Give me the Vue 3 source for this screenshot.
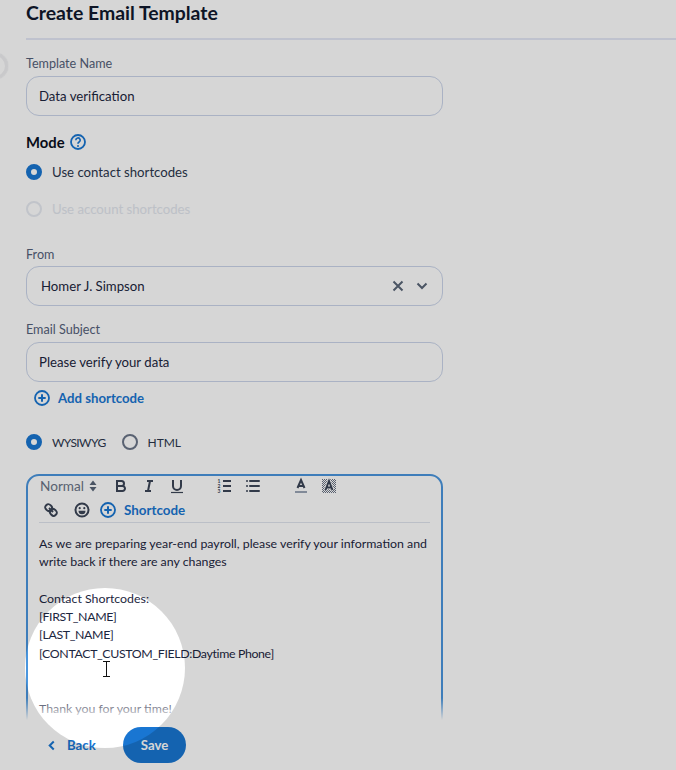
<script setup>
const bodyLines = [
  'As we are preparing year-end payroll, please verify your information and',
  'write back if there are any changes',
  '',
  'Contact Shortcodes:',
  '[FIRST_NAME]',
  '[LAST_NAME]',
  '[CONTACT_CUSTOM_FIELD:Daytime Phone]',
  '',
  '',
  'Thank you for your time!',
].map((text) => ({ text, caps: text.startsWith('[') }))
</script>

<template>
  <div class="page">
    <main class="main">
      <h1 class="title">Create Email Template</h1>
      <div class="form">
        <label class="label first">Template Name</label>
        <div class="input">Data verification</div>

        <div class="mode">
          <span>Mode</span>
          <svg class="help" viewBox="0 0 16 16" width="16" height="16">
            <circle cx="8" cy="8" r="7" fill="none" stroke="#1976d2" stroke-width="1.8" />
            <path d="M5.800 6.200a2.200 2.200 0 1 1 3.300 1.900c-.7.4-1.100.8-1.100 1.600" fill="none" stroke="#1976d2" stroke-width="1.700" />
            <circle cx="8" cy="12" r="1" fill="#1976d2" />
          </svg>
        </div>

        <div class="radio-row top">
          <span class="radio on"></span><span class="radio-text">Use contact shortcodes</span>
        </div>
        <div class="radio-row second disabled">
          <span class="radio off"></span><span class="radio-text">Use account shortcodes</span>
        </div>

        <label class="label from">From</label>
        <div class="input select">
          <span>Homer J. Simpson</span>
          <span class="select-icons">
            <svg viewBox="0 0 12 12" width="12" height="12"><path d="M1.500 1.500l9 9M10.500 1.500l-9 9" stroke="#5a6678" stroke-width="2" fill="none" /></svg>
            <svg viewBox="0 0 12 12" width="12" height="12"><path d="M1.500 3.500L6 8l4.500-4.500" stroke="#5a6678" stroke-width="2" fill="none" /></svg>
          </span>
        </div>

        <label class="label subject">Email Subject</label>
        <div class="input">Please verify your data</div>

        <div class="add">
          <svg viewBox="0 0 16 16" width="16" height="16">
            <circle cx="8" cy="8" r="7" fill="none" stroke="#1976d2" stroke-width="1.8" />
            <path d="M8 4.300v7.400M4.300 8h7.400" stroke="#1976d2" stroke-width="2" />
          </svg>
          <span>Add shortcode</span>
        </div>

        <div class="radio-row modes">
          <span class="radio on"></span><span class="radio-text caps">WYSIWYG</span>
          <span class="radio dark"></span><span class="radio-text caps html">HTML</span>
        </div>

        <div class="editor">
          <div class="toolbar">
            <div class="tool-row">
              <span class="picker">Normal
                <svg viewBox="0 0 8 12" width="8" height="12"><path d="M4 .5L7.500 5H.5zM4 11.500L.5 7h7z" fill="#5a6678" /></svg>
              </span>
              <svg class="ic bold" viewBox="0 0 18 18"><path d="M5,4H9.500A2.500,2.500,0,0,1,12,6.500v0A2.500,2.500,0,0,1,9.500,9H5V4Z" /><path d="M5,9h5.500A2.500,2.500,0,0,1,13,11.500v0A2.500,2.500,0,0,1,10.500,14H5V9Z" /></svg>
              <svg class="ic" viewBox="0 0 18 18"><path d="M7 4h6M5 14h6M8 14l2-10" /></svg>
              <svg class="ic gap" viewBox="0 0 18 18"><path d="M5,3V9a4,4,0,0,0,8,0V3" /><path d="M3 15.500h12" stroke-width="1.200" /></svg>
              <svg class="ic list-o" viewBox="0 0 18 18">
                <path d="M7 4h8M7 9h8M7 14h8" />
                <text x="1.500" y="6" class="num">1</text><text x="1.500" y="11" class="num">2</text><text x="1.500" y="16" class="num">3</text>
              </svg>
              <svg class="ic gap" viewBox="0 0 18 18"><path d="M6 4h9M6 9h9M6 14h9M3 4h.01M3 9h.01M3 14h.01" stroke-linecap="round" /></svg>
              <svg class="ic color" viewBox="0 0 18 18"><path d="M5.500 11L9 3l3.500 8M6.400 9h5.200" /><path d="M3 15h12" stroke="#9aa5b5" /></svg>
              <svg class="ic bg" viewBox="0 0 18 18">
                <defs><pattern id="hatch" width="2" height="2" patternUnits="userSpaceOnUse"><rect width="1" height="1" fill="#6a7486" stroke="none" /><rect x="1" y="1" width="1" height="1" fill="#6a7486" stroke="none" /></pattern></defs>
                <rect x="2" y="2" width="14" height="14" style="fill: url(#hatch); stroke: none" />
                <path d="M5.500 13L9 4l3.500 9M6.500 10.500h5" class="halo" />
                <path d="M5.500 13L9 4l3.500 9M6.500 10.500h5" />
              </svg>
            </div>
            <div class="tool-row two">
              <svg class="ic link" viewBox="0 0 18 18">
                <path d="M7 7l4 4" />
                <path d="M8.900,4.577a3.476,3.476,0,0,1,.36,4.679A3.476,3.476,0,0,1,4.577,8.900C3.185,7.500,2.035,6.400,4.217,4.217S7.500,3.185,8.900,4.577Z" />
                <path d="M13.423,9.100a3.476,3.476,0,0,0-4.679-.36,3.476,3.476,0,0,0,.36,4.679c1.392,1.392,2.500,2.542,4.679.36S14.815,10.500,13.423,9.100Z" />
              </svg>
              <svg class="ic smile" viewBox="0 0 18 18">
                <circle cx="9" cy="9" r="6.500" />
                <circle cx="6.700" cy="7.200" r="1.100" class="solid" />
                <circle cx="11.300" cy="7.200" r="1.100" class="solid" />
                <path d="M5.500 9.800h7a3.500 3.500 0 0 1-7 0z" class="solid" />
              </svg>
              <span class="shortcode">
                <svg viewBox="0 0 16 16" width="16" height="16">
                  <circle cx="8" cy="8" r="7" fill="none" stroke="#1976d2" stroke-width="1.8" />
                  <path d="M8 4.300v7.400M4.300 8h7.400" stroke="#1976d2" stroke-width="2" />
                </svg>
                <span>Shortcode</span>
              </span>
            </div>
          </div>
          <div class="body">
            <div v-for="(line, i) in bodyLines" :key="i" class="line" :class="{ 'caps-line': line.caps }">{{ line.text }}</div>
          </div>
        </div>
      </div>
    </main>

    <footer class="footer">
      <span class="back">
        <svg viewBox="0 0 10 12" width="9" height="11"><path d="M7.500 1.500L3 6l4.500 4.500" fill="none" stroke="#1976d2" stroke-width="2.200" /></svg>
        <span>Back</span>
      </span>
      <span class="save">Save</span>
    </footer>

    <span class="nub"></span>
    <div class="spotlight"></div>
    <svg class="ibeam" viewBox="0 0 9 16" width="9" height="16">
      <path d="M1 .5h7M4.500 .5v15M1 15.500h7" fill="none" stroke="#111" stroke-width="1" />
    </svg>
  </div>
</template>

<style scoped>
.page {
  position: relative;
  width: 676px;
  height: 770px;
  overflow: hidden;
  background: #fff;
  display: flex;
  flex-direction: column;
  font-family: Lato, "Noto Sans", sans-serif;
  color: #1c2640;
  font-size: 13.200px;
}
.main {
  flex: 1;
  min-height: 0;
  overflow: hidden;
  padding-left: 26px;
}
.title {
  margin: 0;
  height: 40px;
  box-sizing: border-box;
  padding-top: 1px;
  border-bottom: 2px solid #e4e8f6;
  font-size: 19.400px;
  line-height: 24px;
  font-weight: 700;
  color: #10182e;
}
.form {
  width: 417px;
  display: flex;
  flex-direction: column;
}
.label {
  display: block;
  font-size: 12.600px;
  line-height: 16px;
  color: #55617a;
}
.label.first { margin-top: 16px; margin-bottom: 4px; }
.label.from { margin-top: 28px; margin-bottom: 3px; }
.label.subject { margin-top: 16px; margin-bottom: 4px; }
.input {
  height: 40px;
  box-sizing: border-box;
  border: 1px solid #cbd5ea;
  border-radius: 13px;
  padding: 0 12px;
  display: flex;
  align-items: center;
}
.select {
  justify-content: space-between;
  padding-left: 14px;
  padding-right: 14px;
}
.select-icons {
  display: flex;
  gap: 12px;
  align-items: center;
}
.mode {
  margin-top: 16px;
  height: 20px;
  display: flex;
  align-items: center;
  gap: 5px;
  font-size: 14.800px;
  font-weight: 700;
  color: #0a0f20;
}
.radio-row {
  display: flex;
  align-items: center;
  height: 20px;
}
.radio-row.top { margin-top: 10px; }
.radio-row.second { margin-top: 17px; }
.radio-row.modes { margin-top: 26px; }
.radio {
  width: 16px;
  height: 16px;
  box-sizing: border-box;
  border-radius: 50%;
  flex: none;
}
.radio.on { border: 5px solid #1976d2; background: #fff; }
.radio.off { border: 2px solid #e6eaf1; }
.radio.dark { border: 2px solid #6b7588; margin-left: 16px; }
.radio-text {
  margin-left: 10px;
  color: #2c364c;
}
.disabled .radio-text { color: #e2e6ee; }
.caps { font-size: 12px; letter-spacing: -.6px; }
.caps.html { letter-spacing: -.05px; }
.add {
  margin-top: 8px;
  padding-left: 8px;
  height: 16px;
  display: flex;
  align-items: center;
  gap: 8px;
  color: #1976d2;
  font-weight: 700;
}
.editor {
  margin-top: 22px;
  height: 300px;
  box-sizing: border-box;
  border: 2px solid #4a96de;
  border-radius: 13px;
  padding: 0 11px;
}
.toolbar {
  padding: 1px 0 0;
  height: 47px;
  box-sizing: border-box;
  border-bottom: 1px solid #dfe4ee;
}
.tool-row {
  display: flex;
  align-items: center;
  height: 18px;
}
.tool-row.two { margin-top: 6px; }
.picker {
  display: flex;
  align-items: center;
  gap: 5px;
  color: #6a7486;
  width: 73px;
  padding-left: 1px;
  box-sizing: border-box;
  font-size: 13.600px;
}
.ic {
  width: 18px;
  height: 18px;
  flex: none;
  fill: none;
  stroke: #3c4658;
  stroke-width: 2;
  margin-right: 10px;
}
.ic.gap { margin-right: 30px; }
.ic .num {
  font-size: 5px;
  fill: #3c4658;
  stroke: none;
  font-weight: 700;
}
.ic .solid { fill: #3c4658; stroke: none; }
.ic .halo { stroke: #fff; stroke-width: 3.500; }
.tool-row.two .ic { margin-right: 10px; margin-left: 3px; }
.shortcode {
  display: flex;
  align-items: center;
  gap: 8px;
  color: #1976d2;
  font-weight: 700;
  margin-left: -1px;
  font-size: 13.400px;
}
.body { padding-top: 12px; }
.line {
  min-height: 18.300px;
  line-height: 18.300px;
  color: #1c2640;
  font-size: 12.350px;
  white-space: nowrap;
}
.caps-line { letter-spacing: -.36px; }
.footer {
  position: relative;
  height: 50px;
  flex: none;
  display: flex;
  align-items: center;
  padding: 0 0 0 47px;
  box-sizing: border-box;
}
.footer::before {
  content: "";
  position: absolute;
  left: 0;
  right: 0;
  bottom: 100%;
  height: 22px;
  background: linear-gradient(to bottom, rgba(255,255,255,0), #fff);
}
.back {
  display: flex;
  align-items: center;
  gap: 11px;
  color: #1976d2;
  font-weight: 700;
  width: 76px;
}
.save {
  width: 63px;
  height: 36px;
  border-radius: 18px;
  background: #1976d2;
  color: #fff;
  font-weight: 700;
  display: flex;
  align-items: center;
  justify-content: center;
}
.nub {
  position: absolute;
  left: -18px;
  top: 53px;
  width: 26px;
  height: 26px;
  box-sizing: border-box;
  border-radius: 50%;
  border: 3px solid #f0f0f2;
  box-shadow: 0 0 1px rgba(120, 130, 150, .35);
}
.spotlight {
  position: absolute;
  left: 25px;
  top: 588px;
  width: 160px;
  height: 160px;
  border-radius: 50%;
  box-shadow: 0 0 0 1200px rgba(0,0,0,.16);
}
.ibeam {
  position: absolute;
  left: 102px;
  top: 661px;
}
</style>
